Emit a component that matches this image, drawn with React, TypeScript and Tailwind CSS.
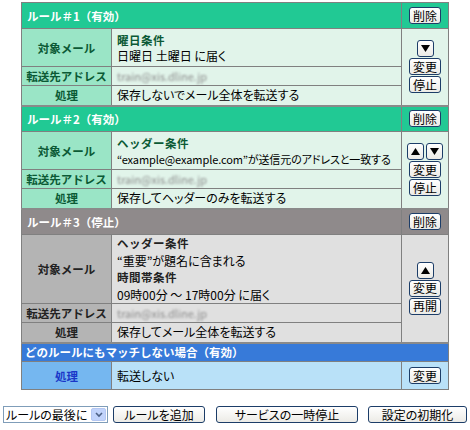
import React from 'react';

type Theme = {
  head: string;
  label: string;
  labelText: string;
  cell: string;
  titleText: string;
};

const GREEN: Theme = {
  head: 'bg-[#21c994]',
  label: 'bg-[#9ae5c6]',
  labelText: 'text-[#0b5a35]',
  cell: 'bg-[#e1f4ea]',
  titleText: 'text-[#0b5a35]',
};

const GRAY: Theme = {
  head: 'bg-[#8f8a8b]',
  label: 'bg-[#b4b4b4]',
  labelText: 'text-[#222]',
  cell: 'bg-[#e0e0e0]',
  titleText: 'text-[#222]',
};

const Btn: React.FC<{ children: React.ReactNode; className?: string }> = ({ children, className = '' }) => (
  <button
    className={`h-[17px] px-[3px] leading-[14px] text-[12px] text-black bg-gradient-to-b from-white to-[#ecebe6] border border-[#1c3d68] rounded-[3px] ${className}`}
  >
    {children}
  </button>
);

const Arrow: React.FC<{ up?: boolean }> = ({ up }) => (
  <button className="w-[17px] h-[17px] flex items-center justify-center bg-gradient-to-b from-white to-[#ecebe6] border border-[#1c3d68] rounded-[3px]">
    <svg width="9" height="7" viewBox="0 0 9 7">
      {up ? <polygon points="4.5,0 9,7 0,7" fill="#000" /> : <polygon points="0,0 9,0 4.5,7" fill="#000" />}
    </svg>
  </button>
);

const Blurred = () => (
  <span className="text-[#8c8c8c] blur-[1px] text-[11px]">train@xis.dline.jp</span>
);

type Rule = {
  title: string;
  theme: Theme;
  target: React.ReactNode;
  targetH: string;
  action: string;
  up?: boolean;
  down?: boolean;
  toggle: string;
};

const bd = 'border border-[#808080] p-0';
const head = 'text-white font-bold text-[11.5px] [font-feature-settings:normal]';
const lbl = 'font-bold text-center text-[11.5px] [font-feature-settings:normal]';
const sep = 'border-t-2 border-t-[#8a8a8a]';

const RuleBlock: React.FC<{ rule: Rule; first?: boolean }> = ({ rule, first }) => {
  const t = rule.theme;
  const top = first ? '' : sep;
  return (
    <>
      <tr className={t.head}>
        <td colSpan={2} className={`${bd} ${top} px-[5px] h-[26px] ${head}`}>
          {rule.title}
        </td>
        <td className={`${bd} ${top} text-center`}>
          <Btn>削除</Btn>
        </td>
      </tr>
      <tr>
        <td className={`${bd} ${t.label} ${t.labelText} ${lbl} ${rule.targetH}`}>対象メール</td>
        <td className={`${bd} ${t.cell} px-[5px]`}>{rule.target}</td>
        <td rowSpan={3} className={`${bd} ${t.cell} align-middle`}>
          <div className="flex flex-col items-center gap-[1px]">
            <div className="flex gap-[2px]">
              {rule.up && <Arrow up />}
              {rule.down && <Arrow />}
            </div>
            <Btn>変更</Btn>
            <Btn>{rule.toggle}</Btn>
          </div>
        </td>
      </tr>
      <tr>
        <td className={`${bd} ${t.label} ${t.labelText} ${lbl} h-[19px]`}>転送先アドレス</td>
        <td className={`${bd} ${t.cell} px-[5px]`}>
          <Blurred />
        </td>
      </tr>
      <tr>
        <td className={`${bd} ${t.label} ${t.labelText} ${lbl} h-[20px]`}>処理</td>
        <td className={`${bd} ${t.cell} px-[5px]`}>{rule.action}</td>
      </tr>
    </>
  );
};

const Title: React.FC<{ t: Theme; children: React.ReactNode }> = ({ t, children }) => (
  <div className={`font-bold tracking-[0.5px] [font-feature-settings:normal] text-[11.5px] ${t.titleText}`}>{children}</div>
);

const rules: Rule[] = [
  {
    title: 'ルール＃1（有効）',
    theme: GREEN,
    targetH: 'h-[38px]',
    target: (
      <>
        <Title t={GREEN}>曜日条件</Title>
        <div>日曜日 土曜日 に届く</div>
      </>
    ),
    action: '保存しないでメール全体を転送する',
    down: true,
    toggle: '停止',
  },
  {
    title: 'ルール＃2（有効）',
    theme: GREEN,
    targetH: 'h-[38px]',
    target: (
      <>
        <Title t={GREEN}>ヘッダー条件</Title>
        <div className="whitespace-nowrap text-[11px] tracking-[-0.1px]">“example@example.com”が送信元のアドレスと一致する</div>
      </>
    ),
    action: '保存してヘッダーのみを転送する',
    up: true,
    down: true,
    toggle: '停止',
  },
  {
    title: 'ルール＃3（停止）',
    theme: GRAY,
    targetH: 'h-[68px]',
    target: (
      <div className="leading-[17px]">
        <Title t={GRAY}>ヘッダー条件</Title>
        <div>“重要”が題名に含まれる</div>
        <Title t={GRAY}>時間帯条件</Title>
        <div>09時00分 ～ 17時00分 に届く</div>
      </div>
    ),
    action: '保存してメール全体を転送する',
    up: true,
    toggle: '再開',
  },
];

export default function App() {
  return (
    <div
      className="w-[470px] h-[430px] bg-white text-[12px] leading-[16px] text-black [font-feature-settings:'palt']"
      style={{ fontFamily: '"Noto Sans CJK JP", "Liberation Sans", sans-serif' }}
    >
      <div className="pt-[2px] pl-[21px]">
        <table className="w-[427px] border-collapse table-fixed">
          <colgroup>
            <col className="w-[90px]" />
            <col className="w-[290px]" />
            <col className="w-[47px]" />
          </colgroup>
          <tbody>
            {rules.map((r, i) => (
              <RuleBlock key={r.title} rule={r} first={i === 0} />
            ))}
            <tr className="bg-[#377ad9]">
              <td colSpan={3} className={`${bd} ${sep} px-[3px] h-[19px] ${head}`}>
                どのルールにもマッチしない場合（有効）
              </td>
            </tr>
            <tr>
              <td className={`${bd} bg-[#75b7f0] text-[#1a37c8] ${lbl} h-[28px]`}>処理</td>
              <td className={`${bd} bg-[#b9e1f8] px-[5px]`}>転送しない</td>
              <td className={`${bd} bg-[#b9e1f8] text-center`}>
                <Btn>変更</Btn>
              </td>
            </tr>
          </tbody>
        </table>
      </div>
      <div className="flex items-center mt-[16px] pl-[3px]">
        <div className="w-[105px] h-[17px] border border-[#7f9db9] flex items-center justify-between pl-[2px] pr-[1px]">
          <span>ルールの最後に</span>
          <span className="w-[15px] h-[13px] bg-[#c1d3fb] border border-[#b4c7f2] rounded-[2px] flex items-center justify-center">
            <svg width="8" height="6" viewBox="0 0 8 6">
              <polyline points="1,1 4,4 7,1" fill="none" stroke="#4d6185" strokeWidth="1.6" />
            </svg>
          </span>
        </div>
        <Btn className="ml-[5px] w-[92px]">ルールを追加</Btn>
        <Btn className="ml-[11px] w-[142px]">サービスの一時停止</Btn>
        <Btn className="ml-[10px] w-[99px]">設定の初期化</Btn>
      </div>
    </div>
  );
}
